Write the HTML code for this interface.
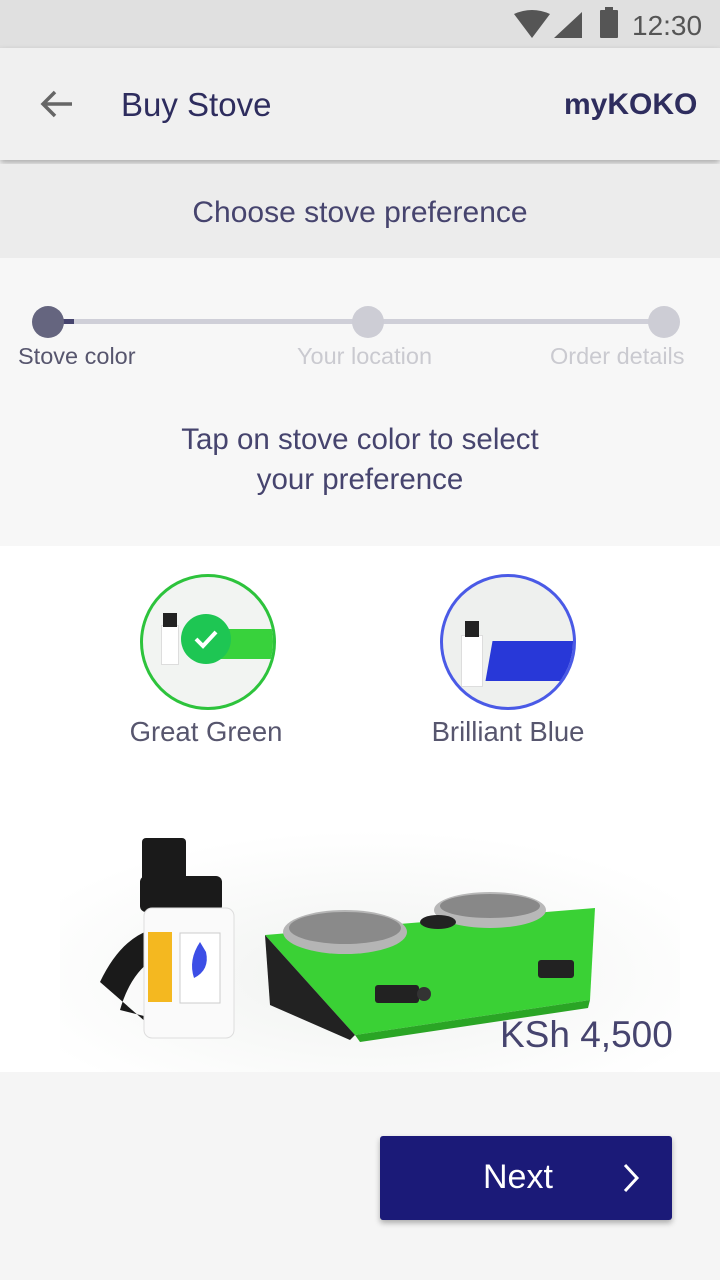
<!DOCTYPE html>
<html><head><meta charset="utf-8"><style>
*{margin:0;padding:0;box-sizing:border-box}
body{width:720px;height:1280px;background:#f5f5f5;font-family:"Liberation Sans","DejaVu Sans",sans-serif;position:relative;overflow:hidden}
.abs{position:absolute}
</style></head><body>
<div class="abs" style="left:0;top:0;width:720px;height:48px;background:#e0e0e0"></div>
<svg class="abs" style="left:510px;top:8px" width="100" height="32" viewBox="0 0 100 32">
<path d="M4 6 Q22 -2 40 6 L22 30 Z" fill="#555"/>
<path d="M72 4 L72 30 L44 30 Z" fill="#555"/>
</svg>
<div class="abs" style="left:600px;top:10px;width:18px;height:28px;background:#555;border-radius:1px"></div>
<div class="abs" style="left:605px;top:7px;width:8px;height:4px;background:#555"></div>
<div class="abs" style="left:632px;top:10px;font-size:28px;color:#555">12:30</div>

<div class="abs" style="left:0;top:48px;width:720px;height:112px;background:#f0f0f0;box-shadow:0 3px 6px rgba(0,0,0,0.3)"></div>
<svg class="abs" style="left:38px;top:88px" width="36" height="32" viewBox="0 0 36 32"><path d="M34 16 H5 M17 4 L5 16 L17 28" stroke="#666" stroke-width="3.5" fill="none"/></svg>
<div class="abs" style="left:121px;top:86px;font-size:33px;color:#2e2d5e;font-weight:500">Buy Stove</div>
<div class="abs" style="left:564px;top:88px;font-size:30px;color:#2e2d5e;font-weight:bold">myKOKO</div>

<div class="abs" style="left:0;top:164px;width:720px;height:94px;background:#ececec"></div>
<div class="abs" style="left:0;top:196px;width:720px;text-align:center;font-size:30px;color:#46446e">Choose stove preference</div>

<div class="abs" style="left:0;top:258px;width:720px;height:288px;background:#f7f7f7"></div>
<div class="abs" style="left:48px;top:319px;width:616px;height:5px;background:#cfcfd8"></div>
<div class="abs" style="left:48px;top:319px;width:26px;height:5px;background:#46446e"></div>
<div class="abs" style="left:32px;top:306px;width:32px;height:32px;border-radius:50%;background:#65657f"></div>
<div class="abs" style="left:352px;top:306px;width:32px;height:32px;border-radius:50%;background:#cdcdd5"></div>
<div class="abs" style="left:648px;top:306px;width:32px;height:32px;border-radius:50%;background:#cdcdd5"></div>
<div class="abs" style="left:18px;top:343px;font-size:23.5px;color:#57566e">Stove color</div>
<div class="abs" style="left:297px;top:343px;font-size:23.5px;color:#cacad0">Your location</div>
<div class="abs" style="left:550px;top:343px;font-size:23.5px;color:#cacad0">Order details</div>
<div class="abs" style="left:0;top:420px;width:720px;text-align:center;font-size:29.5px;line-height:40px;color:#46446e">Tap on stove color to select<br>your preference</div>

<div class="abs" style="left:0;top:546px;width:720px;height:526px;background:#fff"></div>
<div class="abs" style="left:140px;top:574px;width:136px;height:136px;border-radius:50%;border:3px solid #2dc33c;background:#f2f4f2;overflow:hidden">
 <div class="abs" style="left:70px;top:52px;width:62px;height:30px;background:#38d23c;transform:skewX(-10deg)"></div>
 <div class="abs" style="left:18px;top:48px;width:18px;height:40px;background:#fff;border:1px solid #ddd"></div>
 <div class="abs" style="left:20px;top:36px;width:14px;height:14px;background:#222"></div>
</div>
<div class="abs" style="left:181px;top:614px;width:50px;height:50px;border-radius:50%;background:#1ec653"></div>
<svg class="abs" style="left:193px;top:628px" width="26" height="22"><path d="M3 11 L10 18 L23 4" stroke="#fff" stroke-width="4" fill="none"/></svg>
<div class="abs" style="left:440px;top:574px;width:136px;height:136px;border-radius:50%;border:3px solid #4a5ae6;background:#eef0ee;overflow:hidden">
 <div class="abs" style="left:46px;top:64px;width:84px;height:40px;background:#2838d8;transform:skewX(-10deg)"></div>
 <div class="abs" style="left:18px;top:58px;width:22px;height:52px;background:#fff;border:1px solid #ddd"></div>
 <div class="abs" style="left:22px;top:44px;width:14px;height:16px;background:#222"></div>
</div>
<div class="abs" style="left:90px;top:716px;width:232px;text-align:center;font-size:27.5px;color:#57566e">Great Green</div>
<div class="abs" style="left:390px;top:716px;width:236px;text-align:center;font-size:27.5px;color:#57566e">Brilliant Blue</div>

<svg class="abs" style="left:60px;top:830px" width="620" height="242" viewBox="0 0 620 242">
<defs><radialGradient id="g" cx="0.5" cy="0.6" r="0.6"><stop offset="0" stop-color="#f0f2f0"/><stop offset="1" stop-color="#fff"/></radialGradient></defs>
<rect width="620" height="242" fill="url(#g)"/>
<path d="M40 152 Q60 110 90 100 L92 130 Q70 145 60 180 L100 190 L95 200 Z" fill="#1a1a1a"/>
<polygon points="205,105 535,78 530,170 295,205" fill="#3ad135"/>
<polygon points="205,105 295,205 290,210 210,175" fill="#222"/>
<polygon points="295,205 530,170 528,178 300,212" fill="#2aa525"/>
<ellipse cx="285" cy="102" rx="62" ry="22" fill="#b5b5b5"/>
<ellipse cx="285" cy="98" rx="56" ry="16" fill="#8a8a8a"/>
<ellipse cx="430" cy="80" rx="56" ry="18" fill="#b8b8b8"/>
<ellipse cx="430" cy="76" rx="50" ry="12" fill="#888"/>
<ellipse cx="378" cy="92" rx="18" ry="7" fill="#222"/>
<rect x="315" y="155" width="44" height="18" rx="3" fill="#222"/>
<circle cx="364" cy="164" r="7" fill="#333"/>
<rect x="478" y="130" width="36" height="18" rx="3" fill="#222"/>
<rect x="82" y="8" width="44" height="44" rx="4" fill="#1a1a1a"/>
<rect x="80" y="46" width="82" height="36" rx="6" fill="#1a1a1a"/>
<rect x="84" y="78" width="90" height="130" rx="8" fill="#fafafa" stroke="#ddd"/>
<rect x="120" y="103" width="40" height="70" fill="#fff" stroke="#ccc"/>
<path d="M140 112 Q128 130 134 148 Q150 140 146 122 Z" fill="#3c4ee6"/>
<rect x="88" y="102" width="24" height="70" fill="#f4b820"/>
</svg>
<div class="abs" style="left:500px;top:1014px;font-size:37px;color:#46446e;font-weight:500">KSh 4,500</div>

<div class="abs" style="left:380px;top:1136px;width:292px;height:84px;background:#1b1a78;border-radius:3px;box-shadow:0 3px 6px rgba(0,0,0,0.3)"></div>
<div class="abs" style="left:483px;top:1158px;font-size:34px;color:#fff;font-weight:500">Next</div>
<svg class="abs" style="left:620px;top:1162px" width="22" height="32"><path d="M5 3 L17 16 L5 29" stroke="#fff" stroke-width="3" fill="none"/></svg>
</body></html>
